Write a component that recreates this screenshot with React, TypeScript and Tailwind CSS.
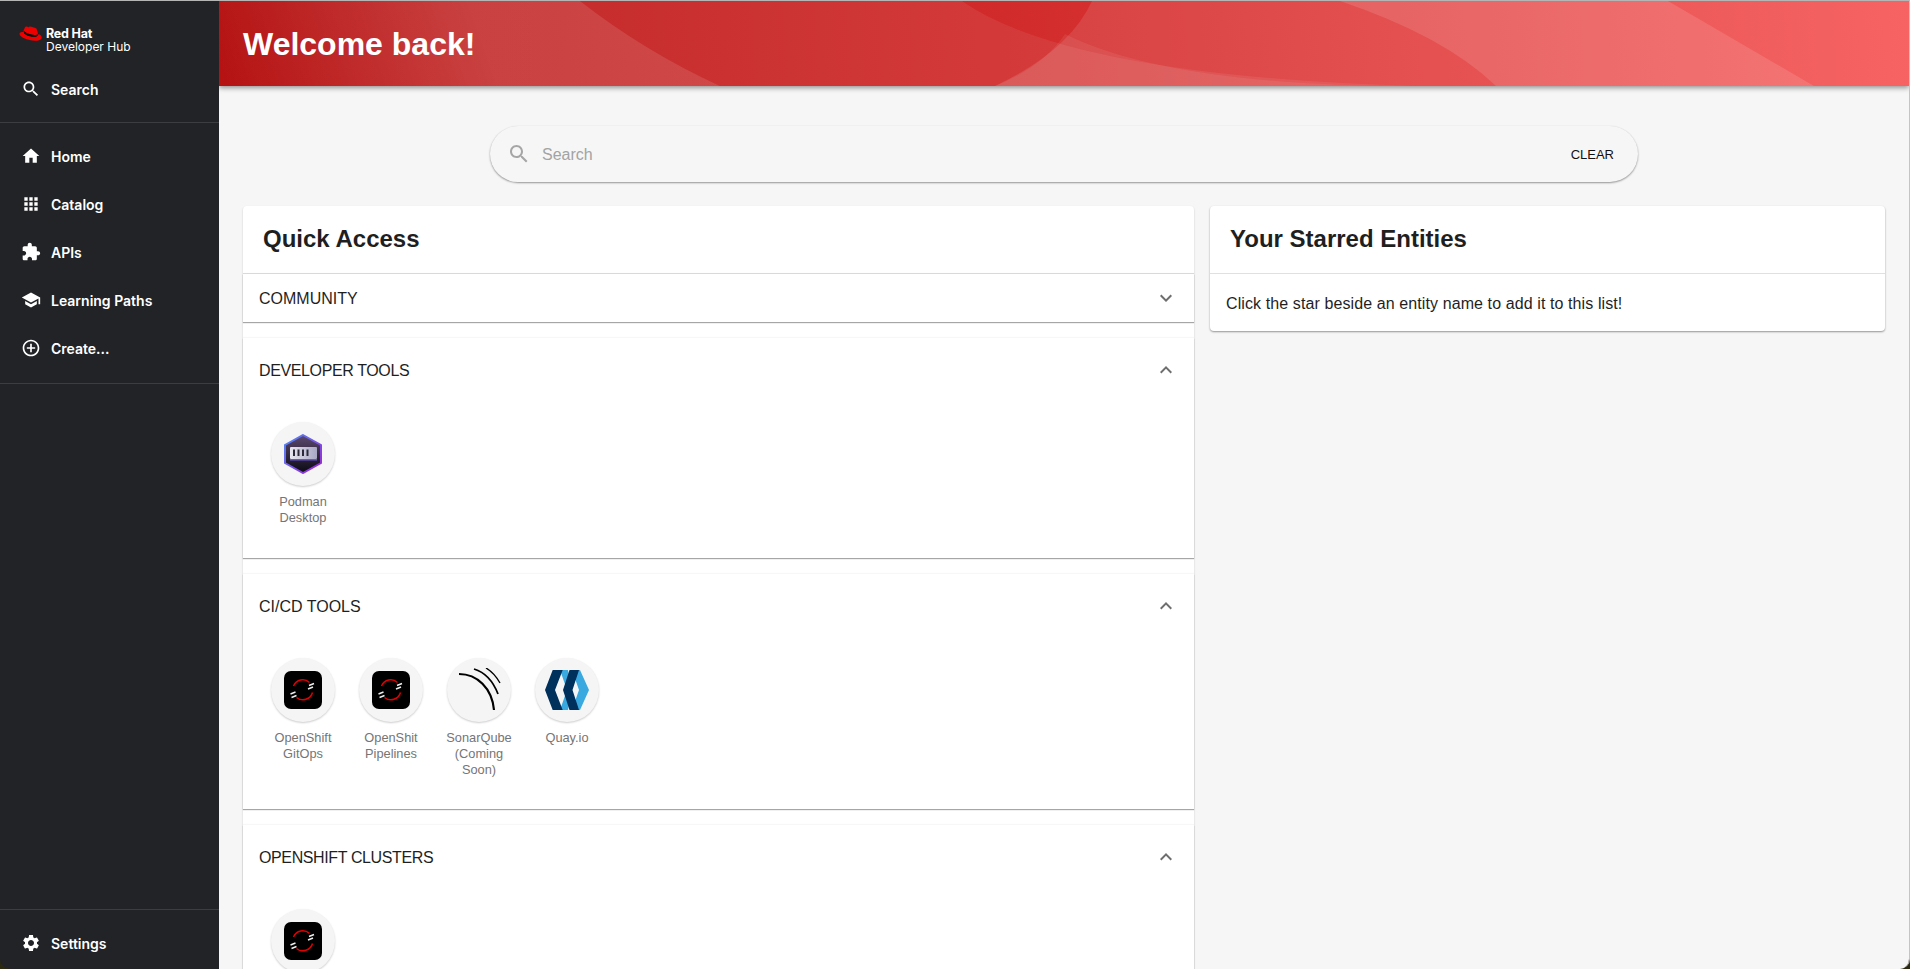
import type { ReactNode } from "react";

const ICONS = {
  search:
    "M15.5 14h-.79l-.28-.27C15.41 12.59 16 11.11 16 9.5 16 5.91 13.09 3 9.5 3S3 5.91 3 9.5 5.91 16 9.5 16c1.61 0 3.09-.59 4.23-1.57l.27.28v.79l5 4.99L20.49 19l-4.99-5zm-6 0C7.01 14 5 11.99 5 9.5S7.01 5 9.5 5 14 7.01 14 9.5 11.99 14 9.5 14z",
  home: "M10 20v-6h4v6h5v-8h3L12 3 2 12h3v8z",
  apps: "M4 8h4V4H4v4zm6 12h4v-4h-4v4zm-6 0h4v-4H4v4zm0-6h4v-4H4v4zm6 0h4v-4h-4v4zm6-10v4h4V4h-4zm-6 4h4V4h-4v4zm6 6h4v-4h-4v4zm0 6h4v-4h-4v4z",
  extension:
    "M20.5 11H19V7c0-1.1-.9-2-2-2h-4V3.5C13 2.12 11.88 1 10.5 1S8 2.12 8 3.5V5H4c-1.1 0-1.99.9-1.99 2v3.8H3.5c1.49 0 2.7 1.21 2.7 2.7s-1.21 2.7-2.7 2.7H2V20c0 1.1.9 2 2 2h3.8v-1.5c0-1.49 1.21-2.7 2.7-2.7 1.49 0 2.7 1.21 2.7 2.7V22H17c1.1 0 2-.9 2-2v-4h1.5c1.38 0 2.5-1.12 2.5-2.5S21.88 11 20.5 11z",
  school: "M5 13.18v4L12 21l7-3.82v-4L12 17l-7-3.82zM12 3 1 9l11 6 9-4.91V17h2V9L12 3z",
  add: "M13 7h-2v4H7v2h4v4h2v-4h4v-2h-4V7zm-1-5C6.48 2 2 6.48 2 12s4.48 10 10 10 10-4.48 10-10S17.52 2 12 2zm0 18c-4.41 0-8-3.59-8-8s3.59-8 8-8 8 3.59 8 8-3.59 8-8 8z",
  settings:
    "M19.14 12.94c.04-.3.06-.61.06-.94 0-.32-.02-.64-.07-.94l2.03-1.58c.18-.14.23-.41.12-.61l-1.92-3.32c-.12-.22-.37-.29-.59-.22l-2.39.96c-.5-.38-1.03-.7-1.62-.94l-.36-2.54c-.04-.24-.24-.41-.48-.41h-3.84c-.24 0-.43.17-.47.41l-.36 2.54c-.59.24-1.13.57-1.62.94l-2.39-.96c-.22-.08-.47 0-.59.22L2.74 8.87c-.12.21-.08.47.12.61l2.03 1.58c-.05.3-.09.63-.09.94s.02.64.07.94l-2.03 1.58c-.18.14-.23.41-.12.61l1.92 3.32c.12.22.37.29.59.22l2.39-.96c.5.38 1.03.7 1.62.94l.36 2.54c.05.24.24.41.48.41h3.84c.24 0 .44-.17.47-.41l.36-2.54c.59-.24 1.13-.56 1.62-.94l2.39.96c.22.08.47 0 .59-.22l1.92-3.32c.12-.22.07-.47-.12-.61l-2.01-1.58zM12 15.6c-1.98 0-3.6-1.62-3.6-3.6s1.62-3.6 3.6-3.6 3.6 1.62 3.6 3.6-1.62 3.6-3.6 3.6z",
  more: "M16.59 8.59 12 13.17 7.41 8.59 6 10l6 6 6-6z",
  less: "M12 8l-6 6 1.41 1.41L12 10.83l4.59 4.58L18 14z",
};

function Icon({ d, className }: { d: string; className?: string }) {
  return (
    <svg viewBox="0 0 24 24" fill="currentColor" className={className}>
      <path d={d} />
    </svg>
  );
}

function NavItem({ icon, label }: { icon: string; label: string }) {
  return (
    <div className="flex h-12 items-center pl-[21px] text-white">
      <Icon d={icon} className="h-5 w-5 shrink-0" />
      <span className="ml-[10px] text-[14px] font-semibold">{label}</span>
    </div>
  );
}

function HatLogo() {
  return (
    <svg viewBox="1 0 23 18.5" preserveAspectRatio="none" className="h-[15px] w-[23px] shrink-0">
      <path
        d="M16 11c1.6 0 3.9-.3 3.9-2.2 0-.2 0-.3-.1-.5l-1-4.1C18.6 3.3 18.4 2.9 16.8 2.1 15.6 1.5 13 .5 12.2.5c-.7 0-.9.9-1.7.9-.8 0-1.4-.7-2.1-.7-.7 0-1.2.5-1.6 1.5 0 0-1.1 3-1.2 3.5v.3c0 1.1 4.4 4.7 10.4 4.7z"
        fill="#ee0000"
      />
      <path
        d="M20 9.6c.2 1 .2 1.1.2 1.2 0 1.6-1.8 2.5-4.2 2.5-5.4 0-10.1-3.2-10.1-5.3 0-.3.1-.6.2-.8C4.1 7.3 1.5 7.7 1.5 9.9c0 3.7 8.7 8.2 15.6 8.2 5.3 0 6.6-2.4 6.6-4.3 0-1.500-1.3-3.200-3.700-4.200z"
        fill="#ee0000"
      />
      <path
        d="M20 9.6c.2 1 .2 1.1.2 1.2 0 1.6-1.8 2.5-4.2 2.5-5.4 0-10.1-3.2-10.1-5.3 0-.3.1-.6.2-.8l.5-1.2v.5c0 1.1 4.4 4.7 10.4 4.7 1.6 0 3.9-.3 3.9-2.2l.1-.1z"
        fill="#111"
      />
    </svg>
  );
}

function Sidebar() {
  return (
    <aside className="flex h-full w-[219px] shrink-0 flex-col bg-[#212326] font-['Inter',sans-serif]">
      <div className="flex h-[64px] items-start pl-[19px] pt-[25px]">
        <HatLogo />
        <div className="ml-[4px] pt-px text-white">
          <div className="text-[12.5px] leading-[13px] font-bold tracking-[-0.2px]">Red Hat</div>
          <div className="text-[12px] leading-[13px] font-normal">Developer Hub</div>
        </div>
      </div>
      <NavItem icon={ICONS.search} label="Search" />
      <div className="mt-[9px] h-px bg-[#3b3d40]" />
      <div className="mt-[9px]">
        <NavItem icon={ICONS.home} label="Home" />
        <NavItem icon={ICONS.apps} label="Catalog" />
        <NavItem icon={ICONS.extension} label="APIs" />
        <NavItem icon={ICONS.school} label="Learning Paths" />
        <NavItem icon={ICONS.add} label="Create..." />
      </div>
      <div className="mt-[11px] h-px bg-[#3b3d40]" />
      <div className="mt-auto h-px bg-[#3b3d40]" />
      <div className="mb-[2px] mt-[9px]">
        <NavItem icon={ICONS.settings} label="Settings" />
      </div>
    </aside>
  );
}

function HeaderArt() {
  return (
    <svg viewBox="0 0 1690 85" preserveAspectRatio="none" className="absolute inset-0 h-full w-full">
      <defs>
        <linearGradient id="base" gradientUnits="userSpaceOnUse" x1="0" y1="85" x2="1690" y2="0">
          <stop offset="0" stopColor="#b51212" />
          <stop offset="0.45" stopColor="#d02a2a" />
          <stop offset="1" stopColor="#f65252" />
        </linearGradient>
        <linearGradient id="glow" gradientUnits="userSpaceOnUse" x1="0" y1="85" x2="250" y2="0">
          <stop offset="0" stopColor="#ffffff" stopOpacity="0" />
          <stop offset="1" stopColor="#ffffff" stopOpacity="0.17" />
        </linearGradient>
      </defs>
      <rect width="1690" height="85" fill="url(#base)" />
      {/* left band */}
      <path d="M0 0H361Q425 50 501 85H0Z" fill="url(#glow)" />
      {/* below the long curve */}
      <path d="M743 0Q850 75 1196 85H501Q425 50 361 0Z" fill="#ffffff" opacity="0.07" />
      {/* right of the short curve */}
      <path d="M873 0H1690V85H776Q850 50 873 0Z" fill="#ffffff" opacity="0.1" />
      <path d="M1121 0H1449L1595 85H1277Q1225 35 1121 0Z" fill="#ffffff" opacity="0.12" />
      <path d="M846 33Q950 85 1196 85H776Q825 65 846 33Z" fill="#ffffff" opacity="0.07" />
    </svg>
  );
}

function Hexagon() {
  return (
    <svg viewBox="0 0 40 40" className="h-10 w-10">
      <defs>
        <linearGradient id="hexBorder" x1="0" y1="0" x2="1" y2="1">
          <stop offset="0" stopColor="#4f8cf7" />
          <stop offset="1" stopColor="#a020d8" />
        </linearGradient>
        <linearGradient id="hexFill" x1="0" y1="0" x2="0" y2="1">
          <stop offset="0" stopColor="#5d4a70" />
          <stop offset="1" stopColor="#0b0a12" />
        </linearGradient>
        <linearGradient id="bar" x1="0" y1="0" x2="1" y2="0">
          <stop offset="0" stopColor="#e8e8f0" />
          <stop offset="1" stopColor="#a8a6c4" />
        </linearGradient>
      </defs>
      <path d="M20 1 38 11V29L20 39 2 29V11Z" fill="url(#hexFill)" stroke="url(#hexBorder)" strokeWidth="2" />
      <rect x="7" y="13" width="27" height="12" rx="1" fill="url(#bar)" />
      <rect x="7" y="25" width="27" height="1.5" fill="#6a55d8" />
      <rect x="10" y="15.5" width="2" height="6.5" fill="#2c2a3a" />
      <rect x="14.5" y="15.5" width="2" height="6.5" fill="#2c2a3a" />
      <rect x="19" y="15.5" width="2" height="6.5" fill="#2c2a3a" />
      <rect x="23.5" y="15.5" width="2" height="6.5" fill="#2c2a3a" />
    </svg>
  );
}

function OpenShiftIcon() {
  return (
    <svg viewBox="0 0 38 38" className="h-[38px] w-[38px]">
      <rect width="38" height="38" rx="7" fill="#000" />
      <path d="M9.5 15A10 10 0 0 1 25.5 11.5" fill="none" stroke="#e00000" strokeWidth="1.5" />
      <path d="M28.5 21.5A10 10 0 0 1 12.5 26.5" fill="none" stroke="#e00000" strokeWidth="1.5" />
      <path d="M6.5 23 11.5 21M7.5 26.5 12.5 24.5M25 14.5 30 12.5M24 18 29 16" stroke="#eeeeee" strokeWidth="1.4" />
    </svg>
  );
}

function SonarIcon() {
  return (
    <svg viewBox="0 0 44 44" className="h-[44px] w-[44px]">
      <path d="M2 6C20 6 35 20 37 42" fill="none" stroke="#000" strokeWidth="2.2" />
      <path d="M17 1C27 4 36 13 41 26" fill="none" stroke="#000" strokeWidth="1.8" />
      <path d="M29 0C34 3 39 8 43 15" fill="none" stroke="#000" strokeWidth="1.4" />
    </svg>
  );
}

function QuayIcon() {
  return (
    <svg viewBox="0 0 44 40" className="h-[40px] w-[44px]">
      <path d="M15 0H23L27 20 23 40H15L22 20Z" fill="#39a9e0" />
      <path d="M27 0H35L44 20 35 40H27L34 20Z" fill="#39a9e0" />
      <path d="M7.7 0H17.7L10 20 17.7 40H7.7L0 20Z" fill="#00305c" />
      <path d="M24.5 0H34L27.5 20 34 40H24.5L18 20Z" fill="#00305c" />
    </svg>
  );
}

function Tile({ children, label }: { children: ReactNode; label?: string }) {
  return (
    <div className="flex w-[88px] flex-col items-center px-[12px]">
      <div className="flex h-16 w-16 shrink-0 items-center justify-center rounded-full bg-[#f5f5f5] shadow-[0_1px_2px_rgba(0,0,0,0.2)]">
        {children}
      </div>
      {label && <div className="mt-2 text-center text-[12.8px] leading-[16px] text-[#757575]">{label}</div>}
    </div>
  );
}

function Section({
  title,
  open,
  tight,
  children,
  bottom,
}: {
  title: string;
  open?: boolean;
  tight?: boolean;
  children?: ReactNode;
  bottom?: string;
}) {
  return (
    <div className="bg-white shadow-[0_1px_1px_rgba(0,0,0,0.35),0_-1px_1px_rgba(0,0,0,0.03)]">
      <div className={`flex items-center justify-between pl-4 pr-[16px] ${open ? "h-[64px]" : "h-[48px]"}`}>
        <span className={`pt-[2px] text-[16px] text-[#1f1f1f] ${tight ? "tracking-[-0.38px]" : ""}`}>{title}</span>
        <Icon d={open ? ICONS.less : ICONS.more} className="h-6 w-6 text-[#6e6e6e]" />
      </div>
      {open && <div className={`flex pl-4 pt-[20px] ${bottom ?? ""}`}>{children}</div>}
    </div>
  );
}

export default function App() {
  return (
    <div className="h-screen overflow-hidden bg-[#2b2a10] font-['Liberation_Sans',Arial,sans-serif]">
      <div className="flex h-full overflow-hidden rounded-b-[10px] border-t border-[#b5b5b5] border-r border-r-[#c4c4c4]">
        <Sidebar />
        <main className="flex min-w-0 flex-1 flex-col overflow-hidden bg-[#f6f6f6]">
          <header className="relative z-10 flex h-[85px] shrink-0 items-center overflow-hidden pl-6 shadow-[0_2px_5px_rgba(0,0,0,0.4)]">
            <HeaderArt />
            <h1 className="relative text-[32px] font-bold text-white">Welcome back!</h1>
          </header>
          <div className="px-6 pt-[40px]">
            <div className="mx-auto flex h-[56px] w-[1148px] items-center rounded-[28px] bg-[#f6f6f6] pl-[17px] pr-[24px] shadow-[0_1px_2px_rgba(0,0,0,0.4),0_0_1px_rgba(0,0,0,0.06)]">
              <Icon d={ICONS.search} className="h-6 w-6 text-[#a6a6a6]" />
              <span className="ml-[11px] flex-1 pt-px text-[16px] text-[#a3a3a3]">Search</span>
              <span className="pt-px text-[13px] text-[#111]">CLEAR</span>
            </div>
            <div className="mt-[24px] flex gap-4">
              <section className="w-[951px] shrink-0 rounded-t bg-white shadow-[0_1px_2px_rgba(0,0,0,0.2)]">
                <h2 className="flex h-[68px] items-center border-b border-[#e0e0e0] pb-[2px] pl-5 text-[24px] font-bold text-[#1f1f1f]">Quick Access</h2>
                <div className="flex flex-col gap-[16px]">
                  <Section title="COMMUNITY" />
                  <Section title="DEVELOPER TOOLS" tight open bottom="pb-[32px]">
                    <Tile label="Podman Desktop">
                      <Hexagon />
                    </Tile>
                  </Section>
                  <Section title="CI/CD TOOLS" open bottom="pb-[31px]">
                    <Tile label="OpenShift GitOps">
                      <OpenShiftIcon />
                    </Tile>
                    <Tile label="OpenShit Pipelines">
                      <OpenShiftIcon />
                    </Tile>
                    <Tile label="SonarQube (Coming Soon)">
                      <SonarIcon />
                    </Tile>
                    <Tile label="Quay.io">
                      <QuayIcon />
                    </Tile>
                  </Section>
                  <Section title="OPENSHIFT CLUSTERS" tight open>
                    <Tile>
                      <OpenShiftIcon />
                    </Tile>
                  </Section>
                </div>
              </section>
              <section className="h-[125px] w-[675px] shrink-0 rounded bg-white shadow-[0_1px_2px_rgba(0,0,0,0.4)]">
                <h2 className="flex h-[68px] items-center border-b border-[#e0e0e0] pb-[2px] pl-5 text-[24px] font-bold text-[#1f1f1f]">Your Starred Entities</h2>
                <p className="pl-4 pt-[20px] text-[16px] leading-[20px] tracking-[0.1px] text-[#1f1f1f]">Click the star beside an entity name to add it to this list!</p>
              </section>
            </div>
          </div>
        </main>
      </div>
    </div>
  );
}
